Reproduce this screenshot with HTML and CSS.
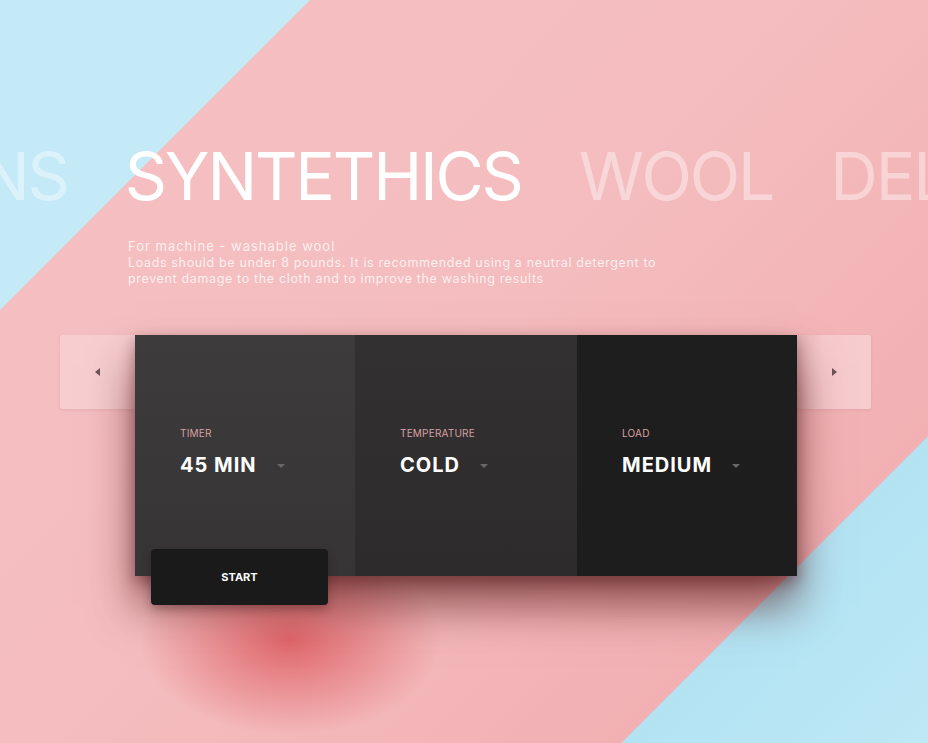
FILE: index.html
```html
<!DOCTYPE html>
<html>
<head>
<meta charset="utf-8">
<link rel="stylesheet" href="styles.css">
</head>
<body>
<div class="page">
  <div class="programs">
    <span class="word dim first">NS</span>
    <span class="word active">SYNTETHICS</span>
    <span class="word dim">WOOL</span>
    <span class="word dim">DEL</span>
  </div>
  <div class="desc">
    <p class="desc-title">For machine - washable wool</p>
    <p class="desc-text">Loads should be under 8 pounds. It is recommended using a neutral detergent to<br>prevent damage to the cloth and to improve the washing results</p>
  </div>
  <div class="control">
    <button class="nav nav-prev" aria-label="Previous">
      <svg width="6" height="8" viewBox="0 0 6 8"><path d="M5 0 L0 4 L5 8 Z" fill="#6d5557"/></svg>
    </button>
    <div class="card">
      <div class="col col-1">
        <div class="label">TIMER</div>
        <div class="value">45 MIN <span class="caret"></span></div>
      </div>
      <div class="col col-2">
        <div class="label">TEMPERATURE</div>
        <div class="value">COLD <span class="caret"></span></div>
      </div>
      <div class="col col-3">
        <div class="label">LOAD</div>
        <div class="value">MEDIUM <span class="caret"></span></div>
      </div>
      <button class="start">START</button>
    </div>
    <button class="nav nav-next" aria-label="Next">
      <svg width="6" height="8" viewBox="0 0 6 8"><path d="M1 0 L6 4 L1 8 Z" fill="#6d5557"/></svg>
    </button>
  </div>
</div>
</body>
</html>
```
FILE: styles.css
```css
html, body {
  margin: 0;
  padding: 0;
}
body {
  width: 928px;
  height: 743px;
  overflow: hidden;
  font-family: "Inter", "Lato", sans-serif;
  background:
    radial-gradient(ellipse 150px 95px at 290px 640px, rgba(220, 88, 92, 0.85), rgba(226, 98, 102, 0) 100%),
    linear-gradient(135deg, #c4eaf7 0%, #c4eaf7 18.5%, #f5bfc1 18.6%, #f4bcbe 50%, #f2b0b3 81.6%, #b3e3f3 81.7%, #bde8f6 100%);
}
.page {
  padding-top: 143px;
}
.programs {
  display: flex;
  gap: 57px;
  white-space: nowrap;
  font-size: 66px;
  line-height: 66px;
  font-weight: 400;
  letter-spacing: -2.2px;
  color: #fff;
}
.word.first {
  margin-left: -20px;
}
.word.dim {
  color: rgba(255, 255, 255, 0.4);
}
.desc {
  margin-top: 28px;
  padding-left: 128px;
  color: rgba(255, 255, 255, 0.78);
}
.desc p {
  margin: 0;
}
.desc-title {
  font-size: 13px;
  line-height: 18px;
  letter-spacing: 1px;
}
.desc-text {
  margin-top: 2px;
  font-size: 12.5px;
  line-height: 16px;
  letter-spacing: 0.65px;
}
.control {
  margin-top: 48px;
  padding-left: 60px;
  display: flex;
  align-items: flex-start;
}
.nav {
  width: 75px;
  height: 74px;
  border: 0;
  padding: 0;
  background: #f7cdd0;
  display: flex;
  align-items: center;
  justify-content: center;
  box-shadow: 0 1px 3px rgba(160, 90, 95, 0.15);
}
.nav-prev {
  border-radius: 3px 0 0 3px;
}
.nav-next {
  border-radius: 0 3px 3px 0;
  width: 74px;
  background: linear-gradient(90deg, #e9b7ba 0%, #f6c9cc 35%, #f7cdd0 100%);
}
.card {
  position: relative;
  width: 662px;
  height: 241px;
  display: grid;
  grid-template-columns: 220px 222px 220px;
  box-shadow: 0 30px 42px rgba(80, 20, 20, 0.62), 0 6px 14px rgba(60, 10, 15, 0.4);
  z-index: 1;
}
.col {
  padding: 92px 0 0 45px;
}
.col-1 {
  background: linear-gradient(180deg, #3d3b3c 0%, #363435 100%);
}
.col-2 {
  background: linear-gradient(180deg, #323031 0%, #2d2b2c 100%);
}
.col-3 {
  background: linear-gradient(180deg, #1f1e1f 0%, #1e1d1e 100%);
}
.label {
  font-size: 10px;
  line-height: 12px;
  color: #d9a1a3;
  letter-spacing: 0.2px;
}
.value {
  margin-top: 14px;
  font-size: 20px;
  line-height: 24px;
  font-weight: 700;
  letter-spacing: 1px;
  color: #fff;
  display: flex;
  align-items: center;
  gap: 20px;
}
.caret {
  width: 0;
  height: 0;
  border-left: 4px solid transparent;
  border-right: 4px solid transparent;
  border-top: 4px solid #6a6768;
  margin-top: 2px;
}
.start {
  position: absolute;
  left: 16px;
  top: 214px;
  width: 177px;
  height: 56px;
  border: 0;
  border-radius: 4px;
  background: #1b1a1b;
  color: #fff;
  font-family: "Inter", sans-serif;
  font-size: 11px;
  font-weight: 700;
  box-shadow: 0 4px 10px rgba(40, 10, 10, 0.3);
}
```
